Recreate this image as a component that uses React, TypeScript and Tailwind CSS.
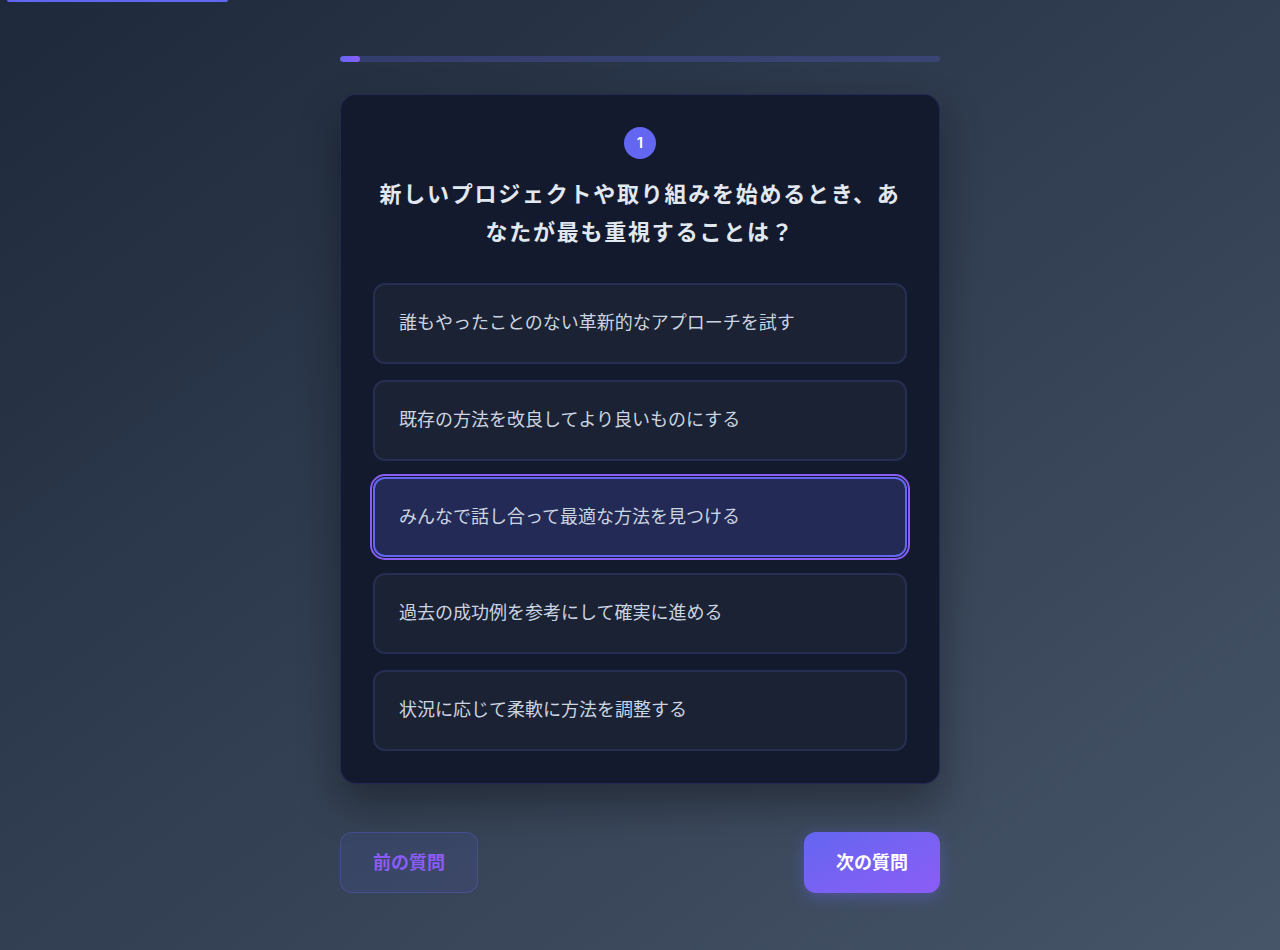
import React from "react";

const options = [
  "誰もやったことのない革新的なアプローチを試す",
  "既存の方法を改良してより良いものにする",
  "みんなで話し合って最適な方法を見つける",
  "過去の成功例を参考にして確実に進める",
  "状況に応じて柔軟に方法を調整する",
];

export default function App() {
  const selected = 2;
  const progress = (1 / 30) * 100;
  return (
    <div
      className="relative min-h-[950px] w-full bg-gradient-to-br from-[#1e293b] to-[#475569]"
      style={{ fontFamily: 'Inter, "Noto Sans CJK JP", sans-serif' }}
    >
      <div className="absolute left-[7px] top-0 h-[2px] w-[221px] rounded-b-full bg-[#6366f1]" />
      <div className="mx-auto w-[600px] pt-[56px]">
        <div className="h-[6px] w-full overflow-hidden rounded-full bg-[#6366f1]/25">
          <div
            className="h-full rounded-full bg-gradient-to-r from-[#6366f1] to-[#8b5cf6]"
            style={{ width: `${progress}%` }}
          />
        </div>

        <div className="mt-8 rounded-2xl border border-[#6366f1]/20 bg-[#131a2d] p-8 shadow-[0_20px_40px_rgba(0,0,0,0.35)]">
          <div className="flex justify-center">
            <div className="flex h-8 w-8 items-center justify-center rounded-full bg-[#6366f1] text-[15px] font-semibold text-white">
              1
            </div>
          </div>
          <h2 className="mt-4 text-center text-[22px] font-bold leading-[38px] tracking-[0.08em] text-[#e2e8f0]">
            新しいプロジェクトや取り組みを始めるとき、あなたが最も重視することは？
          </h2>
          <div className="mt-8 flex flex-col gap-4">
            {options.map((o, i) => (
              <div
                key={i}
                className={
                  i === selected
                    ? "rounded-xl border-2 border-[#6366f1] bg-[#232a55] px-6 py-6 text-lg leading-[1.6] text-[#cbd5e1] outline-2 outline-offset-[1px] outline-[#8b5cf6]"
                    : "rounded-xl border-2 border-[#262e52] bg-[#1b2234] px-6 py-6 text-lg leading-[1.6] text-[#cbd5e1]"
                }
              >
                {o}
              </div>
            ))}
          </div>
        </div>

        <div className="mt-12 flex justify-between">
          <button className="rounded-xl border border-[#6366f1]/30 bg-[#6366f1]/10 px-8 py-4 text-lg font-bold leading-[27px] text-[#8b5cf6]">
            前の質問
          </button>
          <button className="rounded-xl bg-gradient-to-br from-[#6366f1] to-[#8b5cf6] px-8 py-4 text-lg font-bold leading-[27px] text-white shadow-[0_4px_15px_rgba(99,102,241,0.4)]">
            次の質問
          </button>
        </div>
      </div>
    </div>
  );
}
